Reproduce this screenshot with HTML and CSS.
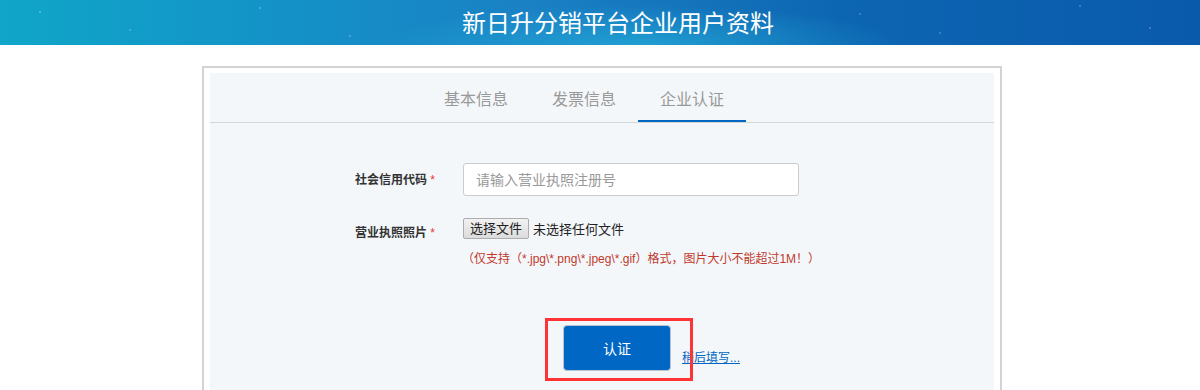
FILE: index.html
```html
<!DOCTYPE html>
<html lang="zh-CN">
<head>
    <meta charset="UTF-8">
    <meta name="viewport" content="width=device-width, initial-scale=1.0">
    <title>新日升分销平台企业用户资料</title>
    <link rel="stylesheet" href="styles.css">
</head>
<body>
    <div class="banner">
        <h1>新日升分销平台企业用户资料</h1>
    </div>

    <div class="panel">
        <div class="inner">
            <div class="tabs">
                <a class="tab">基本信息</a>
                <a class="tab">发票信息</a>
                <a class="tab active">企业认证</a>
            </div>

            <div class="form">
                <div class="row">
                    <label class="label">社会信用代码 <span class="req">*</span></label>
                    <div class="field">
                        <input type="text" class="input" placeholder="请输入营业执照注册号">
                    </div>
                </div>
                <div class="row">
                    <label class="label label-top">营业执照照片 <span class="req">*</span></label>
                    <div class="field">
                        <div class="file">
                            <button class="file-btn">选择文件</button>
                            <span class="file-name">未选择任何文件</span>
                        </div>
                        <div class="hint">（仅支持（*.jpg\*.png\*.jpeg\*.gif）格式，图片大小不能超过1M！）</div>
                    </div>
                </div>

                <div class="actions">
                    <span class="mark"></span>
                    <button class="btn">认证</button>
                    <a href="#" class="later">稍后填写...</a>
                </div>
            </div>
        </div>
    </div>
</body>
</html>
```

FILE: styles.css
```css
body {
    margin: 0;
    font-family: "Liberation Sans", "Noto Sans CJK SC", Arial, sans-serif;
    background-color: #fff;
    color: #333;
}
.banner {
    height: 45px;
    background:
        radial-gradient(1px 1px at 40px 12px, rgba(255,255,255,0.8), transparent),
        radial-gradient(1px 1px at 130px 30px, rgba(255,255,255,0.7), transparent),
        radial-gradient(1px 1px at 260px 8px, rgba(255,255,255,0.7), transparent),
        radial-gradient(1px 1px at 350px 36px, rgba(255,255,255,0.7), transparent),
        radial-gradient(1px 1px at 470px 20px, rgba(255,255,255,0.6), transparent),
        radial-gradient(1px 1px at 860px 14px, rgba(255,255,255,0.6), transparent),
        radial-gradient(1px 1px at 940px 33px, rgba(255,255,255,0.6), transparent),
        radial-gradient(1px 1px at 1080px 6px, rgba(255,255,255,0.7), transparent),
        radial-gradient(1px 1px at 1150px 28px, rgba(255,255,255,0.7), transparent),
        radial-gradient(ellipse 260px 40px at 640px 45px, rgba(40,190,225,0.55), transparent),
        linear-gradient(90deg, #10a6c8 0%, #1395c8 20%, #1a80c4 45%, #0d66b2 70%, #0a5aab 100%);
}
.banner h1 {
    margin: 0 0 0 36px;
    font-size: 24px;
    font-weight: normal;
    line-height: 47px;
    text-align: center;
    color: #fff;
}
.panel {
    width: 800px;
    box-sizing: border-box;
    margin: 21px 0 0 202px;
    padding: 5px 6px 0;
    border: 2px solid #d3d3d3;
    border-bottom: none;
}
.inner {
    background-color: #f4f7fa;
    min-height: 330px;
}
.tabs {
    display: flex;
    padding-left: 212px;
    border-bottom: 1px solid #d6d6d6;
}
.tab {
    width: 108px;
    box-sizing: border-box;
    height: 49px;
    padding-top: 17px;
    font-size: 16px;
    line-height: 20px;
    text-align: center;
    color: #999;
    cursor: pointer;
}
.tab.active {
    border-bottom: 2px solid #0066c2;
}
.form {
    padding-top: 40px;
}
.row {
    display: grid;
    grid-template-columns: 225px 336px;
    column-gap: 28px;
    margin-bottom: 22px;
}
.label {
    align-self: center;
    text-align: right;
    font-size: 12px;
    font-weight: bold;
    line-height: 20px;
    color: #333;
}
.label-top {
    align-self: start;
    padding-top: 5px;
}
.req {
    color: #e4393c;
    font-weight: normal;
}
.input {
    width: 100%;
    height: 33px;
    box-sizing: border-box;
    padding: 0 12px;
    border: 1px solid #ccc;
    border-radius: 3px;
    background-color: #fff;
    font-family: inherit;
    font-size: 14px;
}
.input::placeholder {
    color: #999;
}
.file {
    display: flex;
    align-items: center;
    gap: 4px;
}
.file-btn {
    height: 21px;
    padding: 0 6px;
    border: 1px solid #adadad;
    border-radius: 2px;
    background: linear-gradient(#f2f2f2, #dcdcdc);
    font-family: inherit;
    font-size: 13px;
    line-height: 19px;
    color: #222;
}
.file-name {
    font-size: 13px;
    color: #222;
}
.hint {
    margin-top: 10px;
    margin-left: -1px;
    white-space: nowrap;
    font-size: 12px;
    line-height: 20px;
    color: #c0392b;
}
.actions {
    position: relative;
    display: flex;
    align-items: flex-end;
    gap: 11px;
    padding: 34px 0 0 353px;
}
.btn {
    width: 108px;
    height: 46px;
    border: 1px solid #b9c4d0;
    border-radius: 4px;
    background-color: #0068c4;
    color: #fff;
    font-family: inherit;
    font-size: 14px;
    cursor: pointer;
}
.later {
    margin-bottom: 5px;
    font-size: 12px;
    line-height: 16px;
    color: #0066c2;
}
.mark {
    position: absolute;
    left: 335px;
    top: 27px;
    width: 148px;
    height: 63px;
    box-sizing: border-box;
    border: 3px solid #f33;
}
```
